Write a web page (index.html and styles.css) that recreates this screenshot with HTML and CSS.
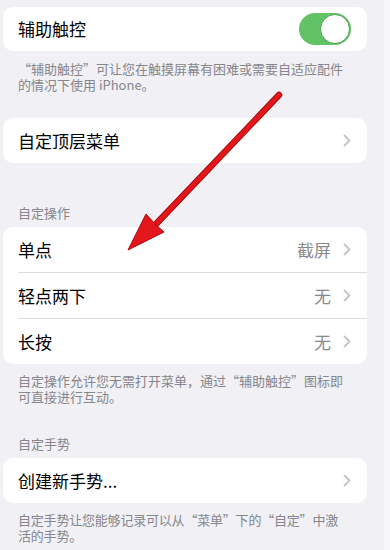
FILE: index.html
```html
<!DOCTYPE html>
<html lang="zh">
<head>
<meta charset="utf-8">
<link rel="stylesheet" href="styles.css">
</head>
<body>
<div class="page">
  <div class="card first">
    <div class="row">
      <span class="label">辅助触控</span>
      <span class="toggle"><span class="knob"></span></span>
    </div>
  </div>
  <p class="footer f1">“辅助触控”可让您在触摸屏幕有困难或需要自适应配件的情况下使用 iPhone。</p>

  <div class="card c2">
    <div class="row">
      <span class="label">自定顶层菜单</span>
      <span class="right"><svg class="chev" width="8" height="13" viewBox="0 0 8 13"><path d="M1.5 1.5 L6.5 6.5 L1.5 11.5" fill="none" stroke="#c4c4c7" stroke-width="1.8" stroke-linecap="round" stroke-linejoin="round"/></svg></span>
    </div>
  </div>

  <p class="header h1">自定操作</p>
  <div class="card">
    <div class="row">
      <span class="label">单点</span>
      <span class="right"><span class="value">截屏</span><svg class="chev" width="8" height="13" viewBox="0 0 8 13"><path d="M1.5 1.5 L6.5 6.5 L1.5 11.5" fill="none" stroke="#c4c4c7" stroke-width="1.8" stroke-linecap="round" stroke-linejoin="round"/></svg></span>
    </div>
    <div class="sep"></div>
    <div class="row">
      <span class="label">轻点两下</span>
      <span class="right"><span class="value">无</span><svg class="chev" width="8" height="13" viewBox="0 0 8 13"><path d="M1.5 1.5 L6.5 6.5 L1.5 11.5" fill="none" stroke="#c4c4c7" stroke-width="1.8" stroke-linecap="round" stroke-linejoin="round"/></svg></span>
    </div>
    <div class="sep"></div>
    <div class="row">
      <span class="label">长按</span>
      <span class="right"><span class="value">无</span><svg class="chev" width="8" height="13" viewBox="0 0 8 13"><path d="M1.5 1.5 L6.5 6.5 L1.5 11.5" fill="none" stroke="#c4c4c7" stroke-width="1.8" stroke-linecap="round" stroke-linejoin="round"/></svg></span>
    </div>
  </div>
  <p class="footer f2">自定操作允许您无需打开菜单，通过“辅助触控”图标即可直接进行互动。</p>

  <p class="header h2">自定手势</p>
  <div class="card">
    <div class="row">
      <span class="label">创建新手势...</span>
      <span class="right"><svg class="chev" width="8" height="13" viewBox="0 0 8 13"><path d="M1.5 1.5 L6.5 6.5 L1.5 11.5" fill="none" stroke="#c4c4c7" stroke-width="1.8" stroke-linecap="round" stroke-linejoin="round"/></svg></span>
    </div>
  </div>
  <p class="footer f2 tight">自定手势让您能够记录可以从“菜单”下的“自定”中激活的手势。</p>

  <svg class="arrow" width="390" height="550" viewBox="0 0 390 550">
    <line x1="279" y1="95" x2="156" y2="224" stroke="#a80a0a" stroke-width="6.5" stroke-linecap="round"/>
    <line x1="279" y1="95" x2="156" y2="224" stroke="#e3161b" stroke-width="4.5" stroke-linecap="round"/>
    <polygon points="128,250 146,214 156,225 164,232" fill="#e3161b" stroke="#a80a0a" stroke-width="1" stroke-linejoin="round"/>
  </svg>
</div>
</body>
</html>
```

FILE: styles.css
```css
html, body {
  margin: 0;
  padding: 0;
  background: #f7f7f9;
}
body {
  font-family: "Noto Sans CJK SC", "Noto Sans", sans-serif;
  width: 390px;
  height: 550px;
  overflow: hidden;
}
.page {
  position: relative;
  width: 384px;
  height: 550px;
  background: #f0f0f5;
  padding: 7px 0 0 3px;
  box-sizing: border-box;
  display: flex;
  flex-direction: column;
}
.card {
  width: 364px;
  background: #ffffff;
  border-radius: 10px;
}
.row {
  height: 45px;
  display: flex;
  align-items: center;
  justify-content: space-between;
  padding: 0 16px 0 15px;
}
.first .row {
  height: 44px;
}
.label {
  font-size: 17px;
  color: #000;
  line-height: 20px;
}
.right {
  display: flex;
  align-items: center;
  gap: 12px;
}
.value {
  font-size: 17px;
  color: #8a8a8e;
  line-height: 20px;
}
.chev {
  display: block;
}
.sep {
  height: 1px;
  background: #dcdce0;
  margin-left: 15px;
}
.toggle {
  width: 52px;
  height: 32px;
  border-radius: 16px;
  background: #62c266;
  display: flex;
  align-items: center;
  justify-content: flex-end;
  padding: 1px;
  box-sizing: border-box;
}
.knob {
  width: 30px;
  height: 30px;
  border-radius: 50%;
  background: #fff;
  box-sizing: border-box;
  border: 1.5px solid #4f9e55;
}
.footer {
  margin: 0;
  padding: 0 0 0 15px;
  width: 337px;
  font-size: 13px;
  line-height: 16px;
  color: #86868b;
}
.tight {
  letter-spacing: -0.2px;
  width: 330px;
}
.f1 {
  margin-top: 10px;
  margin-bottom: 25px;
}
.f2 {
  margin-top: 9px;
}
.header {
  margin: 0;
  padding-left: 15px;
  font-size: 13px;
  line-height: 16px;
  color: #86868b;
  margin-bottom: 6px;
}
.h1 {
  margin-top: 42px;
}
.h2 {
  margin-top: 31px;
}
.arrow {
  position: absolute;
  left: 0;
  top: 0;
  pointer-events: none;
}
```
